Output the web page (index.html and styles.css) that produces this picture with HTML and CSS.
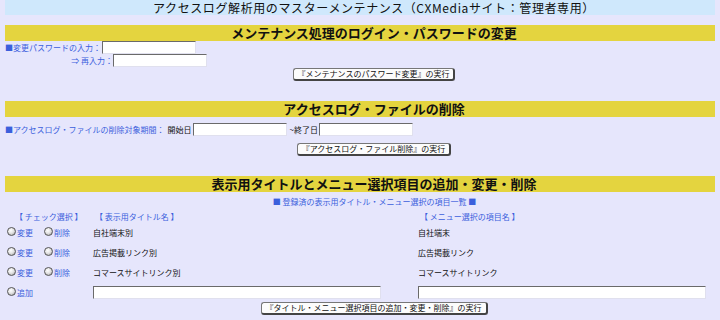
FILE: index.html
```html
<!DOCTYPE html>
<html lang="ja">
<head>
  <meta charset="UTF-8">
  <title>アクセスログ解析用のマスターメンテナンス</title>
  <link rel="stylesheet" href="styles.css">
</head>
<body>
  <div class="page">
    <h1 class="page-title">アクセスログ解析用のマスターメンテナンス（CXMediaサイト：管理者専用）</h1>

    <!-- パスワード変更 -->
    <h2 class="section-head">メンテナンス処理のログイン・パスワードの変更</h2>
    <form class="box">
      <div class="row">
        <label class="lbl lbl-pass">■変更パスワードの入力：</label>
        <input type="password" class="txt">
      </div>
      <div class="row">
        <label class="lbl lbl-repass">⇒ 再入力：</label>
        <input type="password" class="txt">
      </div>
      <div class="btn-line btn-line-1">
        <button type="button" class="btn">『メンテナンスのパスワード変更』の実行</button>
      </div>
    </form>

    <!-- ログ削除 -->
    <h2 class="section-head">アクセスログ・ファイルの削除</h2>
    <form class="box">
      <div class="row row-period">
        <label class="lbl">■アクセスログ・ファイルの削除対象期間：</label>
        <span class="plain">開始日</span>
        <input type="text" class="txt">
        <span class="plain">~終了日</span>
        <input type="text" class="txt">
      </div>
      <div class="btn-line btn-line-2">
        <button type="button" class="btn">『アクセスログ・ファイル削除』の実行</button>
      </div>
    </form>

    <!-- タイトル・メニュー -->
    <h2 class="section-head">表示用タイトルとメニュー選択項目の追加・変更・削除</h2>
    <form class="box">
      <div class="caption">■ 登録済の表示用タイトル・メニュー選択の項目一覧 ■</div>
      <div class="items">
        <div class="col-head col-check">【 チェック選択 】</div>
        <div class="col-head">【 表示用タイトル名 】</div>
        <div class="col-head">【 メニュー選択の項目名 】</div>

        <div class="checks"><span class="radio"></span><a class="act">変更</a><span class="radio r2"></span><a class="act">削除</a></div>
        <div class="cell">自社端末別</div>
        <div class="cell">自社端末</div>

        <div class="checks"><span class="radio"></span><a class="act">変更</a><span class="radio r2"></span><a class="act">削除</a></div>
        <div class="cell">広告掲載リンク別</div>
        <div class="cell">広告掲載リンク</div>

        <div class="checks"><span class="radio"></span><a class="act">変更</a><span class="radio r2"></span><a class="act">削除</a></div>
        <div class="cell">コマースサイトリンク別</div>
        <div class="cell">コマースサイトリンク</div>

        <div class="checks"><span class="radio"></span><a class="act">追加</a></div>
        <div class="cell"><input type="text" class="txt txt-wide"></div>
        <div class="cell"><input type="text" class="txt txt-wide"></div>
      </div>
      <div class="btn-line">
        <button type="button" class="btn">『タイトル・メニュー選択項目の追加・変更・削除』の実行</button>
      </div>
    </form>
  </div>
</body>
</html>
```

FILE: styles.css
```css
* {
  box-sizing: border-box;
  margin: 0;
  padding: 0;
}

body {
  background: #e6e6fc;
  font-family: "Noto Sans CJK JP", "Noto Sans", sans-serif;
  color: #111;
}

.page {
  padding: 0 5px;
}

.page-title {
  height: 15px;
  line-height: 15px;
  margin-bottom: 10px;
  background: #cfe8fc;
  font-size: 12px;
  font-weight: normal;
  text-align: center;
  padding-left: 28px;
  letter-spacing: 0.6px;
  white-space: nowrap;
}

.section-head {
  height: 16px;
  line-height: 16px;
  background: #e4d43f;
  font-size: 13px;
  font-weight: bold;
  text-align: center;
  padding-left: 28px;
}

.box {
  font-size: 8px;
  padding-bottom: 20px;
}

.row {
  display: flex;
  align-items: center;
  height: 13px;
}

.lbl {
  color: #3b5fdc;
  white-space: nowrap;
}

.lbl-pass {
  width: 97px;
}

.lbl-repass {
  width: 108px;
  text-align: right;
}

.row-period {
  margin-top: 6px;
}

.plain {
  margin-left: 3px;
}

.row-period .txt {
  margin-left: 1px;
}

.txt {
  width: 94px;
  height: 13px;
  background: #fff;
  border: 1px solid #e0e0ee;
  border-top-color: #6a6a6a;
  border-left-color: #6a6a6a;
}

.txt-wide {
  width: 288px;
  display: block;
}

.btn-line {
  display: flex;
  justify-content: center;
  padding-left: 28px;
}

.btn-line-1 {
  margin-top: 1px;
}

.btn-line-2 {
  margin-top: 7px;
}

.btn {
  height: 13px;
  padding: 0 4px;
  font-family: inherit;
  font-size: 8px;
  line-height: 10px;
  color: #111;
  background: #fcfcfc;
  border: 1px solid #777;
  border-right: 2px solid #444;
  border-bottom: 2px solid #444;
  border-radius: 3px;
}

.caption {
  padding-top: 5px;
  height: 15px;
  line-height: 10px;
  color: #3b5fdc;
  text-align: center;
  padding-left: 29px;
}

.items {
  display: grid;
  grid-template-columns: 88px 325px 1fr;
  grid-template-rows: 10px repeat(4, 20px);
  margin-top: 5px;
}

.items .col-head {
  color: #3b5fdc;
  line-height: 10px;
  padding-left: 2px;
}

.items .col-check {
  padding-left: 10px;
}

.checks {
  display: flex;
  align-items: center;
  padding-left: 2px;
  padding-top: 1px;
}

.radio {
  width: 9px;
  height: 9px;
  border-radius: 50%;
  border: 1px solid #555;
  background: radial-gradient(circle at 40% 35%, #fff 0, #e4e4e4 45%, #9a9a9a 100%);
  margin-top: -3px;
  margin-right: 1px;
}

.r2 {
  margin-left: 11px;
}

.act {
  color: #3b5fdc;
  cursor: pointer;
}

.cell {
  display: flex;
  align-items: center;
  padding-top: 1px;
}
```
